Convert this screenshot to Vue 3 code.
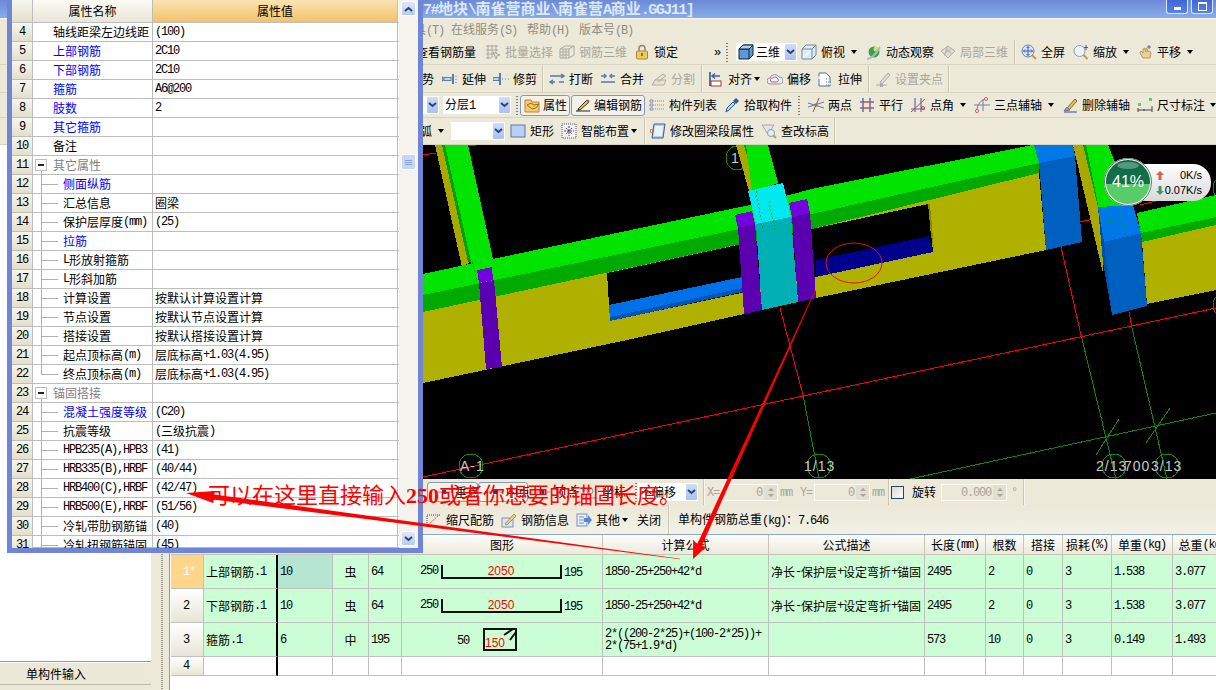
<script setup>
import { h } from 'vue'

const parts = (s) => String(s).split(/([\u0000-\u2fff]+)/).filter(Boolean).map((p) => ({ s: p, lat: /^[\u0000-\u2fff]/.test(p) }))
const T = (props) => parts(props.s).map((p) => h('span', { class: p.lat ? 'lat' : null }, p.s))

const icons = {
  batch: '<g stroke="#aaa99c" fill="none"><path d="M1 2h12M1 6h12M1 10h8M1 14h5M3 1v14M7 1v13M11 1v8"/><path d="M8 8l7 3-3 1-1 3z" fill="#ddd"/></g>',
  grid3: '<g stroke="#aaa99c" fill="none"><path d="M1 5l5-3h9v9l-5 3H1zM1 5h9v9M10 5l5-3M4 5v9M7 5v9M1 8h9M1 11h9"/></g>',
  lock: '<path d="M5 7V4.500a3 3 0 0 1 6 0V7" fill="none" stroke="#8c8672" stroke-width="1.500"/><rect x="2.500" y="7" width="11" height="8" rx="1" fill="#f0c860" stroke="#a88a3a"/><path d="M8 9v3" stroke="#7a5a10" stroke-width="1.500"/>',
  cube: '<path d="M1 5l4-4h10v10l-4 4H1z" fill="#5a9ad8" stroke="#123" /><path d="M1 5h10v10M11 5l4-4" fill="none" stroke="#123"/><path d="M5 1h10l-4 4H1z" fill="#a8d0f0" stroke="#123"/>',
  glass: '<path d="M1 5l4-4h10v10l-4 4H1z" fill="#dcecf4" stroke="#6a8aa0"/><path d="M1 5h10v10M11 5l4-4" fill="none" stroke="#6a8aa0"/><path d="M2 14l8-8" stroke="#fff"/>',
  orbit: '<circle cx="8" cy="8" r="5.500" fill="#3aa24a"/><circle cx="10" cy="5" r="2.500" fill="#d8e060"/><path d="M1 15c3 0 9-4 13-12" fill="none" stroke="#a8b8c8" stroke-width="2"/>',
  local: '<g stroke="#b5b3a6" fill="#dedcd0"><path d="M1 7l7-5 7 5-7 7z"/><path d="M4.500 4.500l7 5M8 2l-3.500 9.500M11.500 4.500L4.500 9.500" fill="none"/></g>',
  full: '<circle cx="7" cy="7" r="6" fill="#dde6f6" stroke="#6a80b0"/><path d="M7 2.500v9M2.500 7h9M5.500 4L7 2.500 8.500 4M5.500 10L7 11.500 8.500 10M4 5.500L2.500 7 4 8.500M10 5.500L11.500 7 10 8.500" fill="none" stroke="#3a5aa8"/><path d="M11 11l4 4" stroke="#c89a40" stroke-width="2"/>',
  zoom: '<circle cx="6.500" cy="7" r="5.500" fill="#eef3fa" stroke="#8a9ab8"/><path d="M10.500 11l4 4" stroke="#c89a40" stroke-width="2"/><path d="M13 1v5M11 3.500h4" stroke="#44608a"/>',
  pan: '<path d="M3 9l1-2 2 2V5l1.500-1L9 8V4l1.500 1L11 8l1.500-1 1.500 2-1 5H6z" fill="#e8d090" stroke="#b89a60"/><path d="M12 1v4M10 3h4" stroke="#5a6a8a"/>',
  ext: '<path d="M0 6h1v4H0zM2 8h6" stroke="#5a7ab0" fill="#9ab4d8"/><rect x="2" y="6.500" width="7" height="3" fill="#c8d6ea" stroke="#5a7ab0"/><path d="M11 3v10" stroke="#5a7ab0" stroke-width="2"/><path d="M14 5v1M14 8v1M14 11v1" stroke="#5a7ab0"/>',
  trim: '<rect x="0" y="6.500" width="6" height="3" fill="#c8d6ea" stroke="#5a7ab0"/><path d="M7 2v12" stroke="#5a7ab0" stroke-width="2"/><path d="M9 8h1M12 8h1M15 8h1" stroke="#5a7ab0"/>',
  brk: '<path d="M1 5h14M1 11h5M10 11h5M12 3l3 2-3 2M4 9l-3 2 3 2" fill="none" stroke="#5a7ab0" stroke-width="1.500"/>',
  mrg: '<path d="M1 5h5M10 5h5M1 11h14M4 3L6 5 4 7M12 3l-2 2 2 2" fill="none" stroke="#5a7ab0" stroke-width="1.500"/>',
  spl: '<path d="M1 14h12l2-5M1 14l3-5h11M4 9l8-6 3 2-8 6" fill="#e4e2d6" stroke="#b0aea0"/>',
  aln: '<path d="M2 1v14" stroke="#234a8a" stroke-width="1.500"/><rect x="3" y="10" width="10" height="5" fill="#fff" stroke="#b03030"/><path d="M4 5h8M7 2.500L4 5l3 2.500" fill="none" stroke="#3a62b0" stroke-width="1.500"/>',
  off: '<path d="M3 13a3 3 0 0 1 0-6 5 5 0 0 1 9-1 3.500 3.500 0 0 1 1 7z" fill="#eef0f8" stroke="#8a94b0"/><path d="M5 11a2 2 0 0 1 1-4 3 3 0 0 1 5 1 2 2 0 0 1-1 3z" fill="none" stroke="#d06060"/>',
  str: '<path d="M1 2h7l4 4v9H1z" fill="#fff" stroke="#4a70a8" stroke-dasharray="16 0 3 2"/><path d="M8 8h2M8 11h5M8 14h6" stroke="#4a70a8" stroke-dasharray="1 1"/>',
  grp: '<path d="M1 14h4M8 14h4M5 13l1-3 7-8 2 2-7 8z" fill="#e0ded2" stroke="#b0aea0"/><rect x="5" y="13" width="3" height="3" fill="#aaa"/>',
  prop: '<path d="M1 3h6l1 2h7v10H1z" fill="#f8c880" stroke="#c08030"/><path d="M3 8l4-2 3 2 5-1-3 4-4 1z" fill="#f0d040" stroke="#987010"/>',
  edit: '<path d="M1 14h14" stroke="#222"/><path d="M3 12l9-9 2 2-9 8z" fill="#e8c840" stroke="#333"/><path d="M3 12l-1 2 3-1" fill="#222"/><path d="M12 3l2 2" stroke="#c05050" stroke-width="2"/>',
  list: '<path d="M1 3h3v2H1zM1 7h3v2H1zM1 11h3v2H1z" fill="#fff" stroke="#7a8ab0"/><path d="M6 4h9M6 8h9M6 12h9" stroke="#7a8ab0" stroke-dasharray="1 1"/>',
  pick: '<path d="M2 15l1-4 6-6 2 2-6 6z" fill="#bcd8f4" stroke="#2a5a9a"/><path d="M9 4l3-3 3 3-3 3z" fill="#2a5a9a"/>',
  two: '<path d="M0 10L16 5M0 6l16 5" stroke="#5a7ab0"/><path d="M5 15l6-14" stroke="#c04040"/><rect x="6.500" y="6.500" width="3" height="3" fill="#6a8a50"/>',
  par: '<path d="M1 5h14M1 11h14" stroke="#c05050" stroke-width="1.500"/><path d="M4 1v14M11 1v14" stroke="#5a70b0" stroke-width="1.500"/>',
  ang: '<path d="M1 12h14M5 1v14M11 1v14" stroke="#5a70b0" stroke-width="1.200"/><path d="M1 15L15 2" stroke="#d04040"/><circle cx="13" cy="11" r="1.500" fill="none" stroke="#d04040"/>',
  arc: '<path d="M3 14C3 7 7 3 12 2" fill="none" stroke="#d05060"/><path d="M0 8h16M9 2v12" stroke="#6a80b0"/><circle cx="3" cy="14" r="1.500" fill="#fff" stroke="#d05060"/><circle cx="12" cy="2" r="1.500" fill="#fff" stroke="#d05060"/>',
  del: '<path d="M2 15h13" stroke="#6a80b0" stroke-width="1.500"/><path d="M5 11l8-9 2 2-8 9z" fill="#e8c050" stroke="#7a6a3a"/><path d="M2 14l3-4 3 3z" fill="#b090c8" stroke="#7a6a98"/>',
  dim: '<rect x="12" y="1" width="3" height="3" fill="#60c878"/><rect x="1" y="6" width="3" height="3" fill="#60c878"/><path d="M1 11v4M15 9v6M1 13h14M7 12v2" stroke="#444"/>',
  rect: '<rect x="1" y="2" width="14" height="12" fill="#b8d0f2" stroke="#5a78b0"/>',
  smart: '<rect x="1" y="1" width="14" height="14" fill="#f0f0f4" stroke="#556" stroke-dasharray="1 1"/><path d="M8 3v10M3 8h10M5 5l6 6M11 5l-6 6" stroke="#445" stroke-dasharray="2 1"/>',
  mod: '<path d="M4 1h11l-2 14H2z" fill="#bcd0ea" stroke="#3a6090"/><path d="M5 3h8l-1 10H4z" fill="#eaf2fa"/><circle cx="1.500" cy="8" r="1.500" fill="none" stroke="#d06030"/>',
  chk: '<path d="M1 2h12l-4 6v4L5 9V8z" fill="#e4e4e4" stroke="#aaa"/><circle cx="10" cy="10" r="3.500" fill="#e0f0fa" stroke="#8a9aa8"/><path d="M12.500 12.500L15 15" stroke="#c89a40" stroke-width="2"/>',
  scl: '<path d="M1 15V3h13" fill="none" stroke="#444" stroke-dasharray="1 1"/><path d="M2 13L13 3" stroke="#c05050" stroke-dasharray="2 1"/>',
  info: '<rect x="1" y="6" width="11" height="9" fill="#dce6f4" stroke="#7a94b8"/><path d="M4 12L13 2l2 2-9 9z" fill="#f0d080" stroke="#a89050"/>',
  oth: '<rect x="1" y="2" width="10" height="12" fill="#e4ecf8" stroke="#7a94b8"/><path d="M3 5h5M3 8h5M3 11h5" stroke="#7a94b8"/><path d="M8 6h4V3l4 5-4 5v-3H8z" fill="#5a88d0"/>',
  pt: '<path d="M0 8h16" stroke="#6a90d0"/><rect x="6" y="6" width="4" height="4" fill="#20408a"/>',
  crd: '<path d="M1 3v11h14" fill="none" stroke="#6a90d0"/><circle cx="8" cy="7" r="3" fill="#dce8fa" stroke="#6a90d0"/>'
}

const w = (list, end = 1216) => list.map((it, i) => ({ ...it, w: (list[i + 1] ? list[i + 1].x : end) - it.x }))

const rows = [
  { cls: 'menu', row: 2, items: [{ x: 0 }, { x: 402, t: '工具(T)' }, { x: 451, t: '在线服务(S)' }, { x: 527, t: '帮助(H)' }, { x: 579, t: '版本号(B)' }] },
  { cls: 'r1', row: 3, items: [{ x: 0 }, { x: 416, t: '查看钢筋量' }, { x: 485, i: 'batch', t: '批量选择', g: 1 }, { x: 559, i: 'grid3', t: '钢筋三维', g: 1 }, { x: 634, i: 'lock', t: '锁定' }, { x: 714, t: '»' }, { x: 726, k: 'grip' }, { x: 736, k: 'combo', i: 'cube', t: '三维', bw: 61 }, { x: 801, i: 'glass', t: '俯视', d: 2 }, { x: 866, i: 'orbit', t: '动态观察' }, { x: 940, i: 'local', t: '局部三维', g: 1 }, { x: 1014, k: 'sep' }, { x: 1021, i: 'full', t: '全屏' }, { x: 1073, i: 'zoom', t: '缩放', d: 2 }, { x: 1137, i: 'pan', t: '平移', d: 2 }] },
  { cls: 'r2', row: 4, items: [{ x: 0 }, { x: 422, t: '势' }, { x: 442, i: 'ext', t: '延伸' }, { x: 493, i: 'trim', t: '修剪' }, { x: 542, k: 'sep' }, { x: 549, i: 'brk', t: '打断' }, { x: 600, i: 'mrg', t: '合并' }, { x: 651, i: 'spl', t: '分割', g: 1 }, { x: 701, k: 'sep' }, { x: 708, i: 'aln', t: '对齐', d: -2 }, { x: 767, i: 'off', t: '偏移' }, { x: 818, i: 'str', t: '拉伸' }, { x: 868, k: 'sep' }, { x: 875, i: 'grp', t: '设置夹点', g: 1 }, { x: 948, k: 'sep' }] },
  { cls: 'r3', row: 5, items: [{ x: 0 }, { x: 400, k: 'combo', t: '', bw: 39 }, { x: 443, k: 'combo', t: '分层1', bw: 68 }, { x: 516, k: 'grip' }, { x: 520, k: 'btn', i: 'prop', t: '属性', bw: 50 }, { x: 571, k: 'btn', i: 'edit', t: '编辑钢筋', bw: 74 }, { x: 649, i: 'list', t: '构件列表' }, { x: 724, i: 'pick', t: '拾取构件' }, { x: 798, k: 'grip' }, { x: 808, i: 'two', t: '两点' }, { x: 859, i: 'par', t: '平行' }, { x: 910, i: 'ang', t: '点角', d: 2 }, { x: 974, i: 'arc', t: '三点辅轴', d: 2 }, { x: 1062, i: 'del', t: '删除辅轴' }, { x: 1137, i: 'dim', t: '尺寸标注', d: 1 }] },
  { cls: 'r4', row: 6, items: [{ x: 0 }, { x: 420, t: '弧', d: 2 }, { x: 451, k: 'combo', t: '', bw: 54 }, { x: 510, i: 'rect', t: '矩形' }, { x: 561, i: 'smart', t: '智能布置', d: -2 }, { x: 644, k: 'sep' }, { x: 650, i: 'mod', t: '修改圈梁段属性' }, { x: 761, i: 'chk', t: '查改标高' }, { x: 834, k: 'sep' }] },
  { cls: 'st low', row: 8, items: [{ x: 169 }, { x: 427, k: 'btn', i: 'pt', t: '垂点', bw: 51 }, { x: 478, k: 'btn', i: 'pt', t: '中点', bw: 50 }, { x: 534, i: 'pt', t: '顶点' }, { x: 582, i: 'crd', t: '坐标' }, { x: 635, k: 'grip' }, { x: 638, k: 'combo', t: '不偏移', bw: 60 }, { x: 703, k: 'sep' }, { x: 707, t: 'X=', g: 1 }, { x: 722, k: 'spin', t: '0', bw: 56 }, { x: 780, t: 'mm', g: 1 }, { x: 800, t: 'Y=', g: 1 }, { x: 814, k: 'spin', t: '0', bw: 56 }, { x: 872, t: 'mm', g: 1 }, { x: 888, k: 'sep' }, { x: 891, k: 'chk' }, { x: 912, t: '旋转' }, { x: 941, k: 'spin', t: '0.000', bw: 66 }, { x: 1011, t: '°', g: 1 }, { x: 1023, k: 'sep' }] },
  { cls: 'rb low', row: 9, items: [{ x: 169 }, { x: 426, i: 'scl', t: '缩尺配筋' }, { x: 501, i: 'info', t: '钢筋信息' }, { x: 576, i: 'oth', t: '其他', d: -2 }, { x: 637, t: '关闭' }, { x: 668, k: 'sep' }, { x: 678, t: '单构件钢筋总重(kg)：7.646' }] }
].map((r) => ({ ...r, items: w(r.items) }))

const props = [
  [4, '轴线距梁左边线距', '(100)', 0, ''], [5, '上部钢筋', '2C10', 0, 'b'], [6, '下部钢筋', '2C10', 0, 'b'], [7, '箍筋', 'A6@200', 0, 'b'], [8, '肢数', '2', 0, 'b'], [9, '其它箍筋', '', 0, 'b'], [10, '备注', '', 0, ''],
  [11, '其它属性', '', 2, 'muted'], [12, '侧面纵筋', '', 1, 'b'], [13, '汇总信息', '圈梁', 1, ''], [14, '保护层厚度(mm)', '(25)', 1, ''], [15, '拉筋', '', 1, 'b'], [16, 'L形放射箍筋', '', 1, ''], [17, 'L形斜加筋', '', 1, ''],
  [18, '计算设置', '按默认计算设置计算', 1, ''], [19, '节点设置', '按默认节点设置计算', 1, ''], [20, '搭接设置', '按默认搭接设置计算', 1, ''], [21, '起点顶标高(m)', '层底标高+1.03(4.95)', 1, ''], [22, '终点顶标高(m)', '层底标高+1.03(4.95)', 3, ''],
  [23, '锚固搭接', '', 2, 'muted'], [24, '混凝土强度等级', '(C20)', 1, 'b'], [25, '抗震等级', '(三级抗震)', 1, ''], [26, 'HPB235(A),HPB3', '(41)', 1, ''], [27, 'HRB335(B),HRBF', '(40/44)', 1, ''], [28, 'HRB400(C),HRBF', '(42/47)', 1, ''], [29, 'HRB500(E),HRBF', '(51/56)', 1, ''], [30, '冷轧带肋钢筋锚', '(40)', 1, ''], [31, '冷轧扭钢筋锚固', '(45)', 1, '']
].map(([n, name, val, lv, c]) => ({ n, name, val, lv, c }))

const heads = ['', '筋号', '直径(mm)', '级别', '图号', '图形', '计算公式', '公式描述', '长度(mm)', '根数', '搭接', '损耗(%)', '单重(kg)', '总重(kg)']
const desc = '净长-保护层+设定弯折+锚固'
const bars = [
  { n: '1*', name: '上部钢筋.1', d: '10', gr: '虫', code: '64', shape: 'u', f: '1850-25+250+42*d', desc, len: '2495', cnt: '2', lap: '0', loss: '3', uw: '1.538', tw: '3.077' },
  { n: '2', name: '下部钢筋.1', d: '10', gr: '虫', code: '64', shape: 'u', f: '1850-25+250+42*d', desc, len: '2495', cnt: '2', lap: '0', loss: '3', uw: '1.538', tw: '3.077' },
  { n: '3', name: '箍筋.1', d: '6', gr: '中', code: '195', shape: 's', f: '2*((200-2*25)+(100-2*25))+\n2*(75+1.9*d)', desc: '', len: '573', cnt: '10', lap: '0', loss: '3', uw: '0.149', tw: '1.493' }
]
const tail = ['len', 'cnt', 'lap', 'loss', 'uw', 'tw']
const blank = Array.from({ length: 12 })
</script>

<template>
  <div class="app">
    <div class="title">
      <span class="ttext"><T s="程7#地块\南雀营商业\南雀营A商业.GGJ11]" /></span>
      <span class="wbtn"><i class="min"></i></span>
      <span class="wbtn"><i class="res"></i></span>
    </div>

    <div v-for="r in rows" :key="r.row" class="tb" :class="r.cls" :style="{ gridRow: r.row }">
      <div v-for="(it, idx) in r.items" :key="idx" class="ti" :class="[it.k, { off: it.g }]" :style="{ width: it.w + 'px' }">
        <template v-if="it.k === 'sep'"><i class="sepl"></i></template>
        <template v-else-if="it.k === 'grip'"><i class="gripl"></i></template>
        <template v-else-if="it.k === 'chk'"><i class="box"></i></template>
        <div v-else-if="it.k === 'combo'" class="cbox" :style="{ width: it.bw + 'px' }">
          <svg v-if="it.i" class="ic" viewBox="0 0 16 16" v-html="icons[it.i]"></svg>
          <span class="ctext"><T :s="it.t" /></span>
          <span class="dd"><svg width="9" height="6"><path d="M1 1l3.500 3L8 1" fill="none" stroke="#2c4470" stroke-width="2" /></svg></span>
        </div>
        <div v-else-if="it.k === 'spin'" class="sbox" :style="{ width: it.bw + 'px' }">
          <span class="sval"><T :s="it.t" /></span>
          <span class="sbtn"><i class="up"></i><i class="dn"></i></span>
        </div>
        <div v-else-if="it.k === 'btn'" class="bbox" :style="{ width: it.bw + 'px' }">
          <svg class="ic" viewBox="0 0 16 16" v-html="icons[it.i]"></svg>
          <span><T :s="it.t" /></span>
        </div>
        <template v-else>
          <svg v-if="it.i" class="ic" viewBox="0 0 16 16" v-html="icons[it.i]"></svg>
          <span v-if="it.t"><T :s="it.t" /></span>
          <i v-if="it.d" class="drop" :style="{ marginLeft: it.d + 'px' }"></i>
        </template>
      </div>
    </div>

    <div class="left">
      <div class="lwhite"></div>
      <div class="ltab">单构件输入</div>
      <div class="ltab2"></div>
    </div>
    <div class="split"><i></i></div>

    <svg class="canvas" viewBox="169 145 1047 334" shape-rendering="crispEdges">
      <rect x="169" y="145" width="1047" height="334" fill="#000" />
      <g fill="none" stroke-width="1">
        <path d="M423 477L1216 308" stroke="#f00" />
        <path d="M780 308L803 395M1061 247L1081 335M1129 312L1132 328M1079 222L1100 218M1140 205L1160 200M423 155L436 153M468 146L476 145" stroke="#f00" />
        <path d="M803 395L819 478M1081 335L1116 479M1132 328L1167 479M910 479L1216 413M1096 455L1119 419M1146 443L1170 408" stroke="#0a8a0a" />
        <ellipse cx="471" cy="466" rx="12" ry="12" stroke="#0a8a0a" />
        <ellipse cx="819" cy="466" rx="12" ry="12" stroke="#0a8a0a" />
        <ellipse cx="1114" cy="466" rx="12" ry="12" stroke="#0a8a0a" />
        <ellipse cx="1167" cy="466" rx="12" ry="12" stroke="#0a8a0a" />
        <ellipse cx="737" cy="158" rx="11" ry="12" stroke="#0a8a0a" />
        <ellipse cx="1226" cy="305" rx="13" ry="13" stroke="#0a8a0a" />
        <ellipse cx="1226" cy="188" rx="13" ry="13" stroke="#0a8a0a" />
      </g>
      <g font-family="Liberation Sans, sans-serif" font-size="14" fill="#c8c8c8">
        <text x="460" y="471" letter-spacing="1">A-1</text>
        <text x="804" y="471" letter-spacing="1">1/13</text>
        <text x="1096" y="471" letter-spacing="1">2/13</text>
        <text x="1124" y="471" letter-spacing="1">700</text>
        <text x="1151" y="471" letter-spacing="1">3/13</text>
        <text x="731" y="163">1</text>
      </g>

      <polygon points="435,145 442,145 470,262 462,267" fill="#a8a800" />
      <polygon points="442,145 446,145 472,262 468,262" fill="#00a000" />
      <polygon points="445,145 468,145 493,259 472,266" fill="#00e400" />
      <polygon points="736,145 745,145 757,190 753,205" fill="#a8a800" />
      <polygon points="744,145 748,145 760,190 756,190" fill="#00a000" />
      <polygon points="746,145 768,145 778,183 752,192" fill="#00e400" />
      <polygon points="1073,145 1083,145 1098,207 1104,242 1103,273" fill="#a8a800" />
      <polygon points="1083,145 1087,145 1101,206 1098,207" fill="#00a000" />
      <polygon points="1086,145 1108,145 1133,207 1099,209" fill="#00e400" />

      <polygon points="423,312 816,228 1039,173 1046,250 816,298 627,340 423,383" fill="#b0b000" />
      <polygon points="423,274 493,259 750,205 816,188 1033,145 1036,145 1039,163 816,213 423,295" fill="#00e400" />
      <polygon points="423,295 816,213 1039,163 1039,173 816,228 423,312" fill="#00aa00" />

      <polygon points="607,273 928,204 933,252 610,321" fill="#000" />
      <polygon points="928,204 930,204 934,250 931,236" fill="#8a8a00" />
      <polygon points="816,260 929,236 933,252 816,277" fill="#00008c" />
      <polygon points="609,305 742,277 742,292 610,321" fill="#0070e8" />
      <polygon points="610,317 742,288 742,292 610,321" fill="#0055b8" />

      <polygon points="477,270 492,267 493,280 479,283" fill="#7400e0" />
      <polygon points="479,283 494,280 502,367 486,369" fill="#5a00b0" />

      <polygon points="748,191 783,183 791,217 756,224" fill="#00e8f0" />
      <polygon points="756,224 791,217 798,302 762,310" fill="#00b0b4" />
      <polygon points="735,215 752,211 755,224 738,228" fill="#7400e0" />
      <polygon points="738,228 755,224 762,310 744,314" fill="#5a00b0" />
      <polygon points="789,203 807,199 810,213 792,217" fill="#7400e0" />
      <polygon points="792,217 810,213 816,298 798,302" fill="#5a00b0" />
      <path d="M756 191L763 230M769 201L775 230M472 262L477 282" stroke="#00a000" stroke-dasharray="2 2" fill="none" />

      <polygon points="1034,145 1073,145 1075,156 1039,163" fill="#0078e8" />
      <polygon points="1039,163 1075,156 1082,242 1046,250" fill="#0060c0" />

      <polygon points="1137,213 1216,195 1216,217 1141,233" fill="#00e400" />
      <polygon points="1141,233 1216,217 1216,225 1142,242" fill="#00aa00" />
      <polygon points="1142,242 1216,225 1216,290 1147,304" fill="#b0b000" />
      <polygon points="1098,207 1104,242 1112,315 1103,262" fill="#0050a8" />
      <polygon points="1098,207 1133,205 1141,233 1104,242" fill="#0078e8" />
      <polygon points="1104,242 1141,233 1147,306 1112,315" fill="#0060c0" />
      <path d="M1103 222L1123 218L1126 235" stroke="#00a000" stroke-dasharray="2 2" fill="none" />
      <ellipse cx="854" cy="263" rx="28" ry="20" fill="none" stroke="#e81010" shape-rendering="auto" />
    </svg>

    <div class="table">
      <div class="grid">
        <div v-for="(hd, i) in heads" :key="'h' + i" class="c hd"><T :s="hd" /></div>
        <template v-for="(b, ri) in bars" :key="ri">
          <div class="c rn" :class="{ sel: ri === 0 }"><T :s="b.n" /></div>
          <div class="c g blk"><T :s="b.name" /></div>
          <div class="c g" :class="{ cur: ri === 0 }"><T :s="b.d" /></div>
          <div class="c g ctr">{{ b.gr }}</div>
          <div class="c g"><T :s="b.code" /></div>
          <div class="c g shape">
            <template v-if="b.shape === 'u'">
              <span class="s1"><T s="250" /></span>
              <svg width="122" height="16" viewBox="0 0 122 16">
                <path d="M1 1v13h119V1" fill="none" stroke="#111" stroke-width="2" />
                <text x="60" y="11" text-anchor="middle" fill="#f00" font-size="12" font-family="Liberation Sans, sans-serif">2050</text>
              </svg>
              <span class="s2"><T s="195" /></span>
            </template>
            <template v-else>
              <span class="s3"><T s="50" /></span>
              <svg width="35" height="23" viewBox="0 0 35 23">
                <path d="M1 1h32v21H1z" fill="none" stroke="#111" stroke-width="2" />
                <path d="M21 7l9-6M27 12l6-8" stroke="#111" stroke-width="2" />
                <text x="2" y="19" fill="#f00" font-size="12" font-family="Liberation Sans, sans-serif">150</text>
              </svg>
            </template>
          </div>
          <div class="c g fm"><T :s="b.f" /></div>
          <div class="c g"><T :s="b.desc" /></div>
          <div v-for="k in tail" :key="k" class="c g"><T :s="b[k]" /></div>
        </template>
        <div class="c rn"><T s="4" /></div>
        <div class="c w blk"></div>
        <div v-for="(_, i) in blank" :key="'e' + i" class="c w"></div>
      </div>
    </div>

    <div class="panel">
      <div class="ptable">
        <div class="prow phead">
          <div class="pn"></div>
          <div class="pc1">属性名称</div>
          <div class="pc2">属性值</div>
        </div>
        <div v-for="p in props" :key="p.n" class="prow">
          <div class="pn"><T :s="String(p.n)" /></div>
          <div class="pname" :class="['lv' + p.lv, p.c]">
            <i v-if="p.lv === 2" class="mbox"></i>
            <T :s="p.name" />
          </div>
          <div class="pval"><T :s="p.val" /></div>
        </div>
      </div>
      <div class="pscroll">
        <span class="sb"><svg width="9" height="6"><path d="M1 5l3.500-3L8 5" fill="none" stroke="#2c4470" stroke-width="2" /></svg></span>
        <span class="thumb"><i></i><i></i><i></i></span>
        <span class="sb last"><svg width="9" height="6"><path d="M1 1l3.500 3L8 1" fill="none" stroke="#2c4470" stroke-width="2" /></svg></span>
      </div>
    </div>

    <div class="speed">
      <div class="pill">
        <div class="srow"><svg width="8" height="9"><path d="M4 0l4 4H5.500v5h-3V4H0z" fill="#d86050" /></svg><span class="sv">0K/s</span></div>
        <div class="srow"><svg width="8" height="9"><path d="M4 9l4-4H5.500V0h-3v5H0z" fill="#3a9a5a" /></svg><span class="sv">0.07K/s</span></div>
      </div>
      <div class="orb"><i class="shine"></i><span>41%</span></div>
    </div>

    <svg class="arrows" viewBox="0 0 1216 690">
      <polygon points="186,493 214.800,491 214.300,494.500 680,558.800 680,559.300 213.700,499.500 213.200,503" fill="#f00" />
      <polygon points="693,559 693.200,541.500 697.500,543.500 815,290 815.600,290.300 702,545.500 706,547.300" fill="#f00" />
    </svg>
    <div class="note">可以在这里直接输入<span>250</span>或者你想要的锚固长度。</div>
  </div>
</template>

<style scoped>
.app {
  position: relative;
  width: 1216px;
  height: 690px;
  overflow: hidden;
  display: grid;
  grid-template-columns: 151px 18px 1047px;
  grid-template-rows: 18px 22px 25px 28px 25px 27px 334px 26px 29px 156px;
  background: #ece9d8;
  font-family: "Noto Sans CJK SC", sans-serif;
  font-size: 12px;
  line-height: 1;
  color: #000;
}
.title {
  grid-column: 1 / -1;
  grid-row: 1;
  display: flex;
  align-items: flex-start;
  padding-left: 408px;
  gap: 2px;
  background: linear-gradient(#6d89d7, #87ace9);
  overflow: hidden;
}
.ttext {
  font-size: 15px;
  font-weight: 700;
  color: #dde8fb;
  margin-right: auto;
  white-space: nowrap;
  line-height: 16px;
}
.wbtn {
  width: 22px;
  height: 14px;
  margin-right: 1px;
  border: 1px solid #dfe8fb;
  border-top: 0;
  border-radius: 0 0 3px 3px;
  box-sizing: border-box;
  background: linear-gradient(#3f66d8, #5a82e6);
  display: flex;
  align-items: center;
  justify-content: center;
}
.wbtn:last-child { margin-right: 3px; }
.min { width: 7px; height: 3px; margin-top: 4px; background: #fff; }
.res { width: 7px; height: 6px; border: 1px solid #fff; border-top-width: 2px; }
.tb {
  grid-column: 1 / -1;
  display: flex;
  align-items: center;
  background: #ece9d8;
  border-bottom: 1px solid #d8d4bf;
  box-sizing: border-box;
  overflow: hidden;
  white-space: nowrap;
}
.tb.menu { color: #8f8d82; border-bottom: 0; border-top: 1px solid #f6f4ea; }
.tb.low { grid-column: 3; }
.tb.st { border-bottom: 0; }
.tb.rb { background: linear-gradient(#ebe8d8, #f3f1e6); border-bottom: 0; }
.ti {
  flex: none;
  display: flex;
  align-items: center;
  gap: 4px;
  height: 100%;
  box-sizing: border-box;
}
.off { color: #a8a69a; }
.ic { width: 16px; height: 16px; flex: none; }
.drop {
  width: 0;
  height: 0;
  border: 3px solid transparent;
  border-top: 4px solid #000;
  border-bottom: 0;
}
.sepl { width: 1px; height: 100%; background: #c9c5af; box-shadow: 1px 0 #f8f6ec; }
.gripl { width: 2px; height: 19px; background: repeating-linear-gradient(#7d7b70 0 1px, transparent 1px 3px); }
.cbox {
  height: 18px;
  flex: none;
  display: flex;
  align-items: center;
  gap: 2px;
  padding-left: 2px;
  background: #fff;
  box-sizing: border-box;
}
.ctext { flex: 1; }
.dd {
  width: 11px;
  height: 16px;
  flex: none;
  margin-right: 1px;
  display: flex;
  align-items: center;
  justify-content: center;
  border-radius: 1px;
  background: linear-gradient(#cdddfa, #a9c1f3);
}
.bbox {
  height: 21px;
  flex: none;
  display: flex;
  align-items: center;
  gap: 3px;
  padding-left: 3px;
  box-sizing: border-box;
  border: 1px solid #7f9db9;
  border-radius: 3px;
  background: #f3f1e8;
}
.st .bbox { padding-left: 8px; height: 20px; }
.sbox {
  height: 17px;
  flex: none;
  display: flex;
  align-items: center;
  justify-content: flex-end;
  gap: 2px;
  box-sizing: border-box;
  border: 1px solid #fbfaf4;
  background: #ece9d8;
  color: #a8a69a;
}
.sbtn {
  width: 13px;
  height: 15px;
  display: flex;
  flex-direction: column;
  align-items: center;
  justify-content: center;
  gap: 3px;
  background: #e2dfd0;
}
.up, .dn { width: 0; height: 0; border: 3px solid transparent; }
.up { border-top: 0; border-bottom: 3px solid #a8a69a; }
.dn { border-bottom: 0; border-top: 3px solid #a8a69a; }
.box { width: 13px; height: 13px; box-sizing: border-box; border: 1px solid #1c4a78; background: linear-gradient(135deg, #dcd9c8, #fff); }

.left {
  grid-column: 1;
  grid-row: 7 / 11;
  display: flex;
  flex-direction: column;
  background: #fff;
  border-right: 1px solid #7f9db9;
  width: 152px;
  box-sizing: border-box;
}
.lwhite { height: 516px; border-bottom: 1px solid #7f9db9; }
.ltab {
  height: 22px;
  padding: 5px 0 0 26px;
  box-sizing: border-box;
  margin-top: 1px;
  background: #ebe8d8;
  border-bottom: 1px solid #bdbaa5;
}
.ltab2 { flex: 1; background: #ebe8d8; }
.split {
  grid-column: 2;
  grid-row: 7 / 11;
  background: #ece9d8;
  display: flex;
  justify-content: center;
  align-items: flex-end;
}
.split i {
  width: 2px;
  height: 150px;
  margin-left: 4px;
  background: repeating-linear-gradient(#9a988c 0 1px, transparent 1px 2px);
}
.canvas {
  grid-column: 3;
  grid-row: 7;
  width: 1047px;
  height: 334px;
  display: block;
}
.table {
  grid-column: 3;
  grid-row: 10;
  overflow: hidden;
  background: #fff;
  border-top: 1px solid #8aa8cc;
  border-left: 1px solid #7f9db9;
  padding-left: 1px;
  box-sizing: border-box;
}
.grid {
  display: grid;
  grid-template-columns: 33px 74px 55px 36px 33px 201px 166px 156px 61px 38px 39px 49px 61px 60px;
  grid-template-rows: 20px 34px 34px 34px 19px;
  width: 1062px;
}
.c {
  display: flex;
  align-items: center;
  padding-left: 2px;
  box-sizing: border-box;
  border-right: 1px solid #c0c0c0;
  border-bottom: 1px solid #c0c0c0;
  white-space: nowrap;
  overflow: hidden;
}
.hd {
  justify-content: center;
  padding-left: 0;
  background: linear-gradient(#fdfdfa, #ece9dc);
  border-color: #c8c5b4;
}
.rn { padding-left: 12px; background: linear-gradient(#fff, #e8e5d6); }
.rn.sel { background: #ffd58a; color: #fff; padding-left: 12px; }
.g { background: #ccfed5; }
.w { background: #fff; }
.cur { background: #b5e6d2; }
.blk { border-right: 2px solid #000; }
.ctr { justify-content: center; padding-left: 0; }
.fm { white-space: pre-line; line-height: 12px; }
.shape { padding-left: 0; }
.s1 { width: 39px; padding-left: 18px; box-sizing: border-box; margin-top: -3px; }
.s2 { margin-left: 1px; }
.s3 { width: 81px; padding-left: 55px; box-sizing: border-box; }

.panel {
  position: absolute;
  left: 7px;
  top: 0;
  width: 416px;
  height: 553px;
  box-sizing: border-box;
  display: flex;
  background: #fff;
  border: solid #7085d6;
  border-width: 0 5px 5px;
  box-shadow: inset 0 -1px #a9b8ec, inset 1px 0 #a9b8ec;
  overflow: hidden;
}
.ptable { width: 387px; flex: none; height: 548px; overflow: hidden; }
.prow {
  display: grid;
  grid-template-columns: 21px 120px 245px;
  height: 19px;
  box-sizing: border-box;
  border-bottom: 1px solid #bdbdbd;
  white-space: nowrap;
}
.prow > div {
  display: flex;
  align-items: center;
  box-sizing: border-box;
  border-right: 1px solid #bdbdbd;
  overflow: hidden;
}
.phead { height: 23px; }
.phead > div { justify-content: center; font-size: 12px; }
.phead .pn { background: linear-gradient(#f5f4ea, #e8e5d4); }
.pc1 { background: linear-gradient(#fbfaf4, #e9e6d6); }
.pc2 { background: linear-gradient(#fbe3b2, #f2c26a); }
.prow .pn { justify-content: center; background: linear-gradient(#f7f6ee, #e2dfcb); }
.pname { position: relative; padding-left: 20px; }
.pname.lv1, .pname.lv3 { padding-left: 30px; }
.pname.lv1::before, .pname.lv3::before {
  content: "";
  position: absolute;
  left: 8px;
  top: 0;
  bottom: 0;
  width: 1px;
  background: #b0b0b0;
}
.pname.lv3::before { bottom: 9px; }
.pname.lv1::after, .pname.lv3::after {
  content: "";
  position: absolute;
  left: 8px;
  top: 9px;
  width: 17px;
  height: 1px;
  background: #b0b0b0;
}
.pname.b { color: #0000ff; }
.pname.muted { color: #808080; }
.mbox {
  position: absolute;
  left: 2px;
  top: 3px;
  width: 12px;
  height: 12px;
  box-sizing: border-box;
  border: 1px solid #bdbdbd;
  background: linear-gradient(#fff 4px, #222 4px, #222 6px, #fff 6px);
  background-size: 6px 100%;
  background-repeat: no-repeat;
  background-position: 2px 0;
}
.pname:has(.mbox)::after {
  content: "";
  position: absolute;
  left: 8px;
  top: 15px;
  bottom: 0;
  width: 1px;
  background: #b0b0b0;
}
.pval { padding-left: 2px; }
.pscroll {
  flex: 1;
  display: flex;
  flex-direction: column;
  align-items: center;
  padding-top: 1px;
  background: #f4f3ee;
}
.sb {
  width: 15px;
  height: 15px;
  display: flex;
  align-items: center;
  justify-content: center;
  flex: none;
  border: 1px solid #fff;
  border-radius: 2px;
  box-sizing: border-box;
  background: linear-gradient(#dde8fc, #b6caf5);
}
.sb.last { margin-top: auto; margin-bottom: 2px; }
.thumb {
  width: 15px;
  height: 16px;
  margin-top: 138px;
  display: flex;
  flex-direction: column;
  align-items: center;
  justify-content: center;
  gap: 1px;
  border: 1px solid #fff;
  border-radius: 2px;
  box-sizing: border-box;
  background: #c6d6f8;
}
.thumb i { width: 7px; height: 1px; background: #8aa4dc; }

.speed {
  position: absolute;
  left: 1104px;
  top: 158px;
  width: 108px;
  height: 48px;
}
.pill {
  position: absolute;
  left: 24px;
  top: 6px;
  width: 83px;
  height: 37px;
  box-sizing: border-box;
  padding: 5px 9px 0 28px;
  border-radius: 18px;
  background: linear-gradient(#fff, #d9d9d9);
  display: flex;
  flex-direction: column;
  gap: 3px;
  font-family: "Liberation Sans", sans-serif;
}
.srow { display: flex; align-items: center; height: 12px; font-size: 11px; }
.sv { margin-left: auto; }
.orb {
  position: absolute;
  left: 0;
  top: 0;
  width: 48px;
  height: 48px;
  box-sizing: border-box;
  border: 2px solid #f2f2ee;
  border-radius: 50%;
  outline: 1px solid #5e7e6e;
  outline-offset: -1px;
  background: linear-gradient(#0a6a44 0, #14704a 54%, #58cc68 54%, #58cc68 100%);
  display: flex;
  align-items: center;
  justify-content: center;
  color: #fff;
  font-family: "Liberation Sans", sans-serif;
  font-size: 16px;
  overflow: hidden;
}
.shine {
  position: absolute;
  left: 11px;
  top: 2px;
  width: 22px;
  height: 7px;
  border-radius: 50%;
  background: rgba(255, 255, 255, 0.3);
}
.orb span { position: relative; }
.arrows {
  position: absolute;
  left: 0;
  top: 0;
  width: 1216px;
  height: 690px;
  pointer-events: none;
}
.note {
  position: absolute;
  left: 208px;
  top: 481px;
  font-size: 22px;
  line-height: 24px;
  color: #f00;
  white-space: nowrap;
  pointer-events: none;
}
.note span { font-family: "Liberation Serif", serif; font-weight: 700; }
</style>

<style>
html, body { margin: 0; background: #ece9d8; }
.lat { font-family: "Liberation Mono", monospace; letter-spacing: -0.1em; }
</style>
